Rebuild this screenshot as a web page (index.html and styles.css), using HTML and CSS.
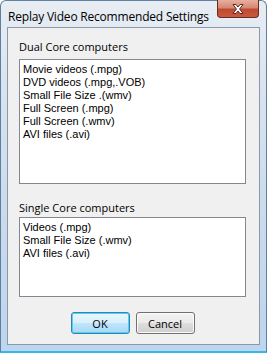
FILE: index.html
```html
<!DOCTYPE html>
<html>
<head>
<meta charset="utf-8">
<link rel="stylesheet" href="styles.css">
</head>
<body>
<div class="window">
  <div class="titlebar">
    <span class="title">Replay Video Recommended Settings</span>
    <div class="close">
      <svg width="20" height="12" viewBox="0 0 20 12">
        <path d="M5 1.5 L8 1.5 L10 4 L12 1.5 L15 1.5 L11.6 6 L15 10.5 L12 10.5 L10 8 L8 10.5 L5 10.5 L8.4 6 Z" fill="#fff" stroke="#5a2a22" stroke-width="1" stroke-linejoin="round"/>
      </svg>
    </div>
  </div>
  <div class="client">
    <div class="label">Dual Core computers</div>
    <div class="list list-dual">
      <div class="item">Movie videos (.mpg)</div>
      <div class="item">DVD videos (.mpg,.VOB)</div>
      <div class="item">Small File Size .(wmv)</div>
      <div class="item">Full Screen (.mpg)</div>
      <div class="item">Full Screen (.wmv)</div>
      <div class="item">AVI files (.avi)</div>
    </div>
    <div class="label label-second">Single Core computers</div>
    <div class="list list-single">
      <div class="item">Videos (.mpg)</div>
      <div class="item">Small File Size (.wmv)</div>
      <div class="item">AVI files (.avi)</div>
    </div>
    <div class="buttons">
      <button class="btn btn-default">OK</button>
      <button class="btn">Cancel</button>
    </div>
  </div>
</div>
</body>
</html>
```
FILE: styles.css
```css
html, body {
  margin: 0;
  padding: 0;
  background: #ffffff;
}
.window {
  box-sizing: border-box;
  width: 267px;
  height: 353px;
  background: linear-gradient(180deg, #e8edf3 0%, #d6e2ef 30%, #c8d9ec 70%, #bdd5ee 100%);
  border: 1px solid #5f7f9f;
  border-radius: 6px 6px 0 0;
  border-bottom: 2px solid #36b8ee;
  display: flex;
  flex-direction: column;
  font-family: "Open Sans", "Noto Sans", sans-serif;
}
.titlebar {
  height: 26px;
  display: flex;
  align-items: flex-start;
  justify-content: space-between;
}
.title {
  margin: 7px 0 0 7px;
  font-size: 12px;
  color: #000;
  letter-spacing: -0.2px;
}
.close {
  width: 42px;
  height: 18px;
  margin-right: 7px;
  margin-top: -1px;
  box-sizing: border-box;
  border: 1px solid #6b2a20;
  border-top: none;
  border-radius: 0 0 4px 4px;
  background: linear-gradient(180deg, #e8b0a0 0%, #d48874 45%, #c04a30 55%, #c85a3e 100%);
  display: flex;
  align-items: center;
  justify-content: center;
}
.client {
  margin-left: 6px;
  width: 253px;
  box-sizing: border-box;
  height: 318px;
  background: #f0f0f0;
  border: 1px solid #8a99aa;
  padding: 11px 13px 0 11px;
  display: flex;
  flex-direction: column;
  font-family: "Open Sans", "Noto Sans", sans-serif;
  font-size: 11px;
  color: #000;
}
.label {
  height: 15px;
  line-height: 15px;
  margin-bottom: 5px;
}
.label-second {
  margin-top: 16px;
  margin-bottom: 2px;
}
.list {
  box-sizing: border-box;
  background: #fff;
  border: 1px solid #828790;
  padding: 3px 2px 0 3px;
  font-family: "Liberation Sans", Arial, sans-serif;
  font-size: 11px;
}
.list-dual {
  height: 125px;
}
.list-single {
  height: 80px;
}
.item {
  height: 13px;
  line-height: 13px;
  white-space: nowrap;
}
.buttons {
  display: flex;
  justify-content: center;
  gap: 6px;
  margin-top: 15px;
}
.btn {
  box-sizing: border-box;
  width: 59px;
  height: 22px;
  font-family: "Open Sans", "Noto Sans", sans-serif;
  font-size: 11px;
  color: #000;
  border: 1px solid #707070;
  border-radius: 3px;
  background: linear-gradient(180deg, #f2f2f2 0%, #ebebeb 48%, #dddddd 52%, #cfcfcf 100%);
  box-shadow: inset 0 0 0 1px #fbfbfb;
  padding: 0;
}
.btn-default {
  border-color: #3c7fb1;
  box-shadow: inset 0 0 0 1px #48d3f8;
  background: linear-gradient(180deg, #eaf6fd 0%, #d9f0fc 48%, #bee6fd 52%, #a7d9f5 100%);
}
```
